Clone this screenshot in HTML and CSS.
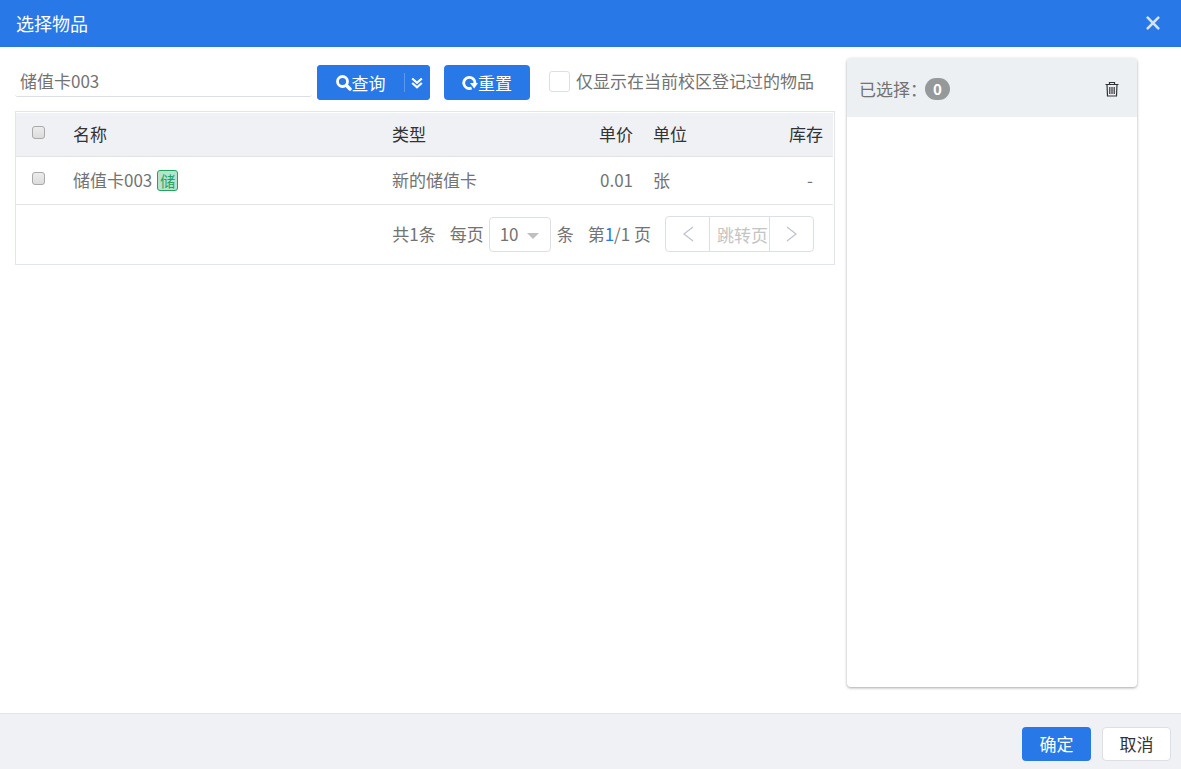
FILE: index.html
```html
<!DOCTYPE html>
<html lang="zh-CN">
<head>
    <meta charset="UTF-8">
    <meta name="viewport" content="width=device-width, initial-scale=1.0">
    <title>选择物品</title>
    <link rel="stylesheet" href="styles.css">
</head>
<body>

    <div class="modal">
        <header class="modal-header">
            <h1>选择物品</h1>
            <button type="button" class="btn-close" aria-label="关闭">
                <svg width="14" height="14" viewBox="0 0 14 14"><path d="M1.7 1.7L12.3 12.3M12.3 1.7L1.7 12.3" stroke="currentColor" stroke-width="2.6" stroke-linecap="round"/></svg>
            </button>
        </header>

        <main class="modal-body">
            <section class="goods">
                <!-- 查询条件 -->
                <form class="search-bar">
                    <input type="text" class="keyword" value="储值卡003" aria-label="名称">
                    <div class="btn-group">
                        <button type="button" class="btn btn-primary btn-search">
                            <svg width="16" height="16" viewBox="0 0 16 16" fill="none" stroke="currentColor"><circle cx="6.5" cy="6.5" r="5" stroke-width="2.8"/><path d="M10.5 10.5L14 14" stroke-width="3.4" stroke-linecap="round"/></svg>查询
                        </button>
                        <button type="button" class="btn btn-primary btn-more" aria-label="更多条件">
                            <svg width="12" height="12" viewBox="0 0 12 12" fill="none" stroke="currentColor" stroke-width="2.2"><path d="M1.2 1.5L6 5.8L10.8 1.5M1.2 6L6 10.3L10.8 6"/></svg>
                        </button>
                    </div>
                    <button type="button" class="btn btn-primary btn-reset">
                        <svg width="16" height="16" viewBox="0 0 16 16"><path d="M9.6 13A5.6 5.6 0 1 1 12.9 8.5" fill="none" stroke="currentColor" stroke-width="2.8"/><path d="M8 8H16L12.2 13.4Z" fill="currentColor"/></svg>重置
                    </button>
                    <label class="only-campus"><input type="checkbox" class="check-lg">仅显示在当前校区登记过的物品</label>
                </form>

                <!-- 物品列表 -->
                <div class="goods-list">
                    <table>
                        <thead>
                            <tr>
                                <th class="col-check"><input type="checkbox" class="check" aria-label="全选"></th>
                                <th>名称</th>
                                <th class="col-type">类型</th>
                                <th class="col-price">单价</th>
                                <th class="col-unit">单位</th>
                                <th class="col-stock">库存</th>
                            </tr>
                        </thead>
                        <tbody>
                            <tr>
                                <td class="col-check"><input type="checkbox" class="check" aria-label="选择储值卡003"></td>
                                <td>储值卡003<span class="tag">储</span></td>
                                <td>新的储值卡</td>
                                <td class="col-price">0.01</td>
                                <td>张</td>
                                <td class="col-stock">-</td>
                            </tr>
                        </tbody>
                    </table>

                    <div class="pager">
                        <span class="total">共1条</span>
                        <label for="pageSize">每页</label>
                        <span class="select-wrap">
                            <select id="pageSize">
                                <option>10</option>
                                <option>20</option>
                                <option>50</option>
                            </select>
                        </span>
                        <span class="unit">条</span>
                        <span class="current">第<b>1</b>/1 页</span>
                        <div class="page-jump">
                            <button type="button" aria-label="上一页">
                                <svg width="12" height="18" viewBox="0 0 12 18"><path d="M11 2L2 9L11 16" fill="none" stroke="currentColor" stroke-width="1.3"/></svg>
                            </button>
                            <input type="text" placeholder="跳转页" aria-label="跳转页">
                            <button type="button" aria-label="下一页">
                                <svg width="12" height="18" viewBox="0 0 12 18"><path d="M1 2L10 9L1 16" fill="none" stroke="currentColor" stroke-width="1.3"/></svg>
                            </button>
                        </div>
                    </div>
                </div>
            </section>

            <!-- 已选择的物品 -->
            <aside class="selected">
                <div class="selected-header">
                    <span>已选择：</span>
                    <span class="badge">0</span>
                    <button type="button" class="btn-clear" aria-label="清空">
                        <svg width="14" height="16" viewBox="0 0 14 16" fill="none" stroke="currentColor" stroke-width="1.2"><path d="M0.5 3.5H13.5M4.5 3.5V1.5H9.5V3.5M2 3.5L2.5 15H11.5L12 3.5M4.8 6V13M7 6V13M9.2 6V13"/></svg>
                    </button>
                </div>
            </aside>
        </main>

        <footer class="modal-footer">
            <button type="button" class="btn btn-primary">确定</button>
            <button type="button" class="btn btn-default">取消</button>
        </footer>
    </div>

</body>
</html>
```

FILE: styles.css
```css
* {
    box-sizing: border-box;
}

body {
    margin: 0;
    font-family: "Noto Sans CJK SC", sans-serif;
    font-size: 17px;
    line-height: 24px;
    color: #737373;
    background-color: #fff;
}

button, input, select {
    font: inherit;
    color: inherit;
    margin: 0;
}

button {
    padding: 0;
    border: none;
    background: none;
    cursor: pointer;
}

svg {
    display: block;
    flex: none;
}

.modal {
    display: flex;
    flex-direction: column;
    min-height: 100vh;
}

.modal-header {
    display: flex;
    align-items: center;
    justify-content: space-between;
    height: 47px;
    padding: 0 21px 2px 16px;
    background-color: #2878e8;
    color: #fff;
}

.modal-header h1 {
    margin: 0;
    font-size: 18px;
    font-weight: normal;
}

.btn-close {
    color: #d4e4fa;
}

.modal-body {
    flex: 1;
    display: flex;
    gap: 12px;
    padding: 11px 44px 26px 15px;
}

.goods {
    flex: 1;
    min-width: 0;
}

/* 按钮 */
.btn {
    display: flex;
    align-items: center;
    justify-content: center;
    height: 35px;
    border-radius: 4px;
    white-space: nowrap;
}

.btn-primary {
    background-color: #2878e8;
    color: #fff;
}

.btn-default {
    border: 1px solid #dcdfe6;
    background-color: #fff;
    color: #333;
}

/* 查询条件 */
.search-bar {
    display: flex;
    align-items: flex-start;
    padding: 7px 21px 11px 0;
}

.keyword {
    flex: 1;
    min-width: 0;
    height: 32px;
    margin-right: 5px;
    padding: 0 5px;
    border: none;
    border-bottom: 1px solid #dcdfe6;
    border-radius: 3px;
    outline: none;
    background: none;
}

.btn-group {
    display: flex;
    margin-right: 14px;
    border-radius: 4px;
    background-color: #2878e8;
}

.btn-search {
    width: 87px;
}

.btn-more {
    position: relative;
    width: 26px;
}

.btn-more::before {
    content: "";
    position: absolute;
    left: 0;
    top: 8px;
    bottom: 8px;
    border-left: 1px solid #5b98ee;
}

.btn-reset {
    width: 86px;
    margin-right: 19px;
}

.only-campus {
    display: flex;
    align-items: center;
    gap: 6px;
    height: 32px;
    white-space: nowrap;
}

.check-lg {
    appearance: none;
    width: 21px;
    height: 21px;
    border: 1px solid #dcdfe6;
    border-radius: 3px;
    background-color: #fff;
}

/* 物品列表 */
.goods-list {
    padding: 1px 1px 0 0;
    border: 1px solid #e2e5ec;
}

table {
    width: 100%;
    table-layout: fixed;
    border-collapse: collapse;
}

th, td {
    height: 48px;
    padding: 0 10px;
    border-bottom: 1px solid #e2e4e9;
    text-align: left;
    font-weight: normal;
    white-space: nowrap;
}

th {
    height: 43px;
    background-color: #f0f1f5;
    color: #333;
}

.col-check {
    width: 47px;
    padding: 0 0 4px 16px;
}

.col-type {
    width: 180px;
}

.col-price {
    width: 81px;
    text-align: right;
}

.col-unit {
    width: 90px;
}

.col-stock {
    width: 100px;
    text-align: right;
}

td.col-stock {
    padding-right: 20px;
}

.check {
    display: block;
    appearance: none;
    width: 13px;
    height: 13px;
    border: 1px solid #a9a9a9;
    border-radius: 3px;
    background-image: linear-gradient(#ececec, #dcdcdc);
}

.tag {
    display: inline-block;
    width: 21px;
    height: 21px;
    margin-left: 5px;
    border: 1px solid #1fa463;
    border-radius: 3px;
    background-color: #b9e2cd;
    color: #1fa463;
    font-size: 15px;
    line-height: 19px;
    text-align: center;
}

/* 分页 */
.pager {
    display: flex;
    align-items: center;
    justify-content: flex-end;
    height: 59px;
    padding-right: 19px;
    white-space: nowrap;
}

.pager .total {
    margin-right: 14px;
}

.pager .unit {
    margin: 0 14px 0 6px;
}

.pager .current {
    margin-right: 14px;
}

.pager .current b {
    color: #2878e8;
    font-weight: normal;
}

.select-wrap {
    position: relative;
    margin-left: 5px;
}

.select-wrap::after {
    content: "";
    position: absolute;
    right: 12px;
    top: 16px;
    border: 6px solid transparent;
    border-top-color: #c0c0c0;
    border-bottom: none;
    pointer-events: none;
}

.select-wrap select {
    display: block;
    appearance: none;
    width: 62px;
    height: 35px;
    padding: 0 10px;
    border: 1px solid #dcdfe6;
    border-radius: 4px;
    background-color: #fff;
}

.page-jump {
    display: flex;
    height: 36px;
    border: 1px solid #dcdfe6;
    border-radius: 4px;
    color: #c0c4cc;
}

.page-jump button {
    display: flex;
    align-items: center;
    justify-content: center;
    width: 43px;
}

.page-jump input {
    width: 61px;
    padding: 2px 0 0 7px;
    border: 1px solid #dcdfe6;
    border-width: 0 1px;
    outline: none;
    background: none;
}

.page-jump input::placeholder {
    color: #c4c4c4;
}

/* 已选择 */
.selected {
    width: 290px;
    border-radius: 4px;
    box-shadow: 0 1px 3px rgba(0, 0, 0, 0.35);
    overflow: hidden;
}

.selected-header {
    display: flex;
    align-items: center;
    height: 59px;
    padding: 2px 18px 0 12px;
    background-color: #ecf0f3;
}

.badge {
    width: 25px;
    height: 22px;
    margin-left: -2px;
    border-radius: 11px;
    background-color: #95999a;
    color: #fff;
    font-size: 15px;
    font-weight: bold;
    line-height: 22px;
    text-align: center;
}

.btn-clear {
    margin-left: auto;
    color: #333;
}

.modal-footer {
    display: flex;
    justify-content: flex-end;
    gap: 11px;
    height: 56px;
    padding: 13px 10px 0;
    border-top: 1px solid #e2e4e9;
    background-color: #f0f1f5;
}

.modal-footer .btn {
    width: 69px;
    height: 34px;
}
```
